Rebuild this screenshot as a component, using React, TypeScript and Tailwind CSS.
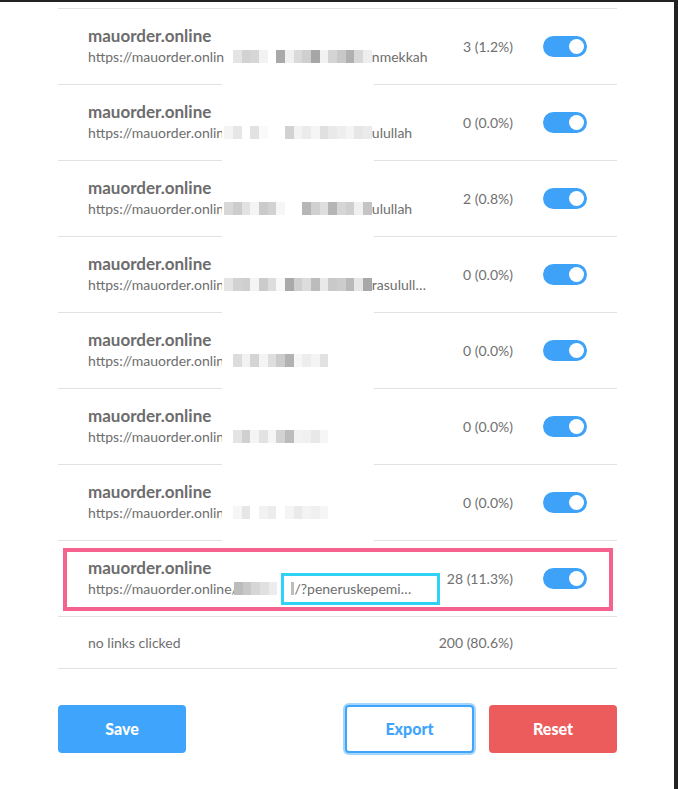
import React from 'react';

type Row = {
  clicks: string;
  tail?: string;
  mosaic: string[];
};

// censored middle part of each url, drawn as a strip of grey blocks
const rows: Row[] = [
  { clicks: '3 (1.2%)', tail: 'nmekkah', mosaic: ['#ffffff', '#e4e4e4', '#d2d2d2', '#d6d6d6', '#f2f2f2', '#ffffff', '#a9a9a9', '#f0f0f0', '#dadada', '#cfcfcf', '#a6a6a6', '#f2f2f2', '#d4d4d4', '#c8c8c8', '#b0b0b0', '#d8d8d8', '#eeeeee'] },
  { clicks: '0 (0.0%)', tail: 'ulullah', mosaic: ['#f4f4f4', '#e6e6e6', '#ffffff', '#e2e2e2', '#fafafa', '#ffffff', '#ffffff', '#d2d2d2', '#f3f3f3', '#ebebeb', '#f5f5f5', '#e0e0e0', '#e9e9e9', '#eeeeee', '#f4f4f4', '#e6e6e6', '#ebebeb'] },
  { clicks: '2 (0.8%)', tail: 'ulullah', mosaic: ['#d8d8d8', '#cccccc', '#e2e2e2', '#f4f4f4', '#cacaca', '#d2d2d2', '#f6f6f6', '#ffffff', '#ffffff', '#b6b6b6', '#d0d0d0', '#dedede', '#b5b5b5', '#d6d6d6', '#cfcfcf', '#f0f0f0', '#c4c4c4'] },
  { clicks: '0 (0.0%)', tail: 'rasulull…', mosaic: ['#e4e4e4', '#d2d2d2', '#cfcfcf', '#f4f4f4', '#cbcbcb', '#dddddd', '#f8f8f8', '#a9a9a9', '#cfcfcf', '#dcdcdc', '#bcbcbc', '#e9e9e9', '#c9c9c9', '#cdcdcd', '#b9b9b9', '#e6e6e6', '#a8a8a8'] },
  { clicks: '0 (0.0%)', mosaic: ['#ffffff', '#dcdcdc', '#f2f2f2', '#d4d4d4', '#f4f4f4', '#dedede', '#cbcbcb', '#b2b2b2', '#f6f6f6', '#ededed', '#f4f4f4', '#e2e2e2'] },
  { clicks: '0 (0.0%)', mosaic: ['#ffffff', '#e4e4e4', '#d0d0d0', '#f4f4f4', '#e2e2e2', '#f5f5f5', '#d2d2d2', '#bcbcbc', '#f2f2f2', '#f0f0f0', '#e8e8e8', '#f6f6f6'] },
  { clicks: '0 (0.0%)', mosaic: ['#ffffff', '#f6f6f6', '#e6e6e6', '#ffffff', '#f2f2f2', '#ececec', '#ffffff', '#f4f4f4', '#eaeaea', '#f3f3f3', '#f0f0f0', '#f6f6f6'] },
];

function Toggle() {
  return (
    <div className="flex h-[21px] w-[44px] shrink-0 items-center justify-end rounded-full bg-[#3da2f8] pr-[3px]">
      <div className="h-[15px] w-[15px] rounded-full bg-white" />
    </div>
  );
}

function Mosaic({ shades }: { shades: string[] }) {
  return (
    <span className="relative z-20 inline-flex h-[13px] shrink-0 items-center bg-white">
      {shades.map((c, i) => (
        <span key={i} className="inline-block h-[13px] w-[8.7px]" style={{ backgroundColor: c }} />
      ))}
    </span>
  );
}

function LinkRow({ row }: { row: Row }) {
  return (
    <div className="flex h-[76px] items-center border-b border-[#e2e2e2] pl-[30px] pr-[30px]">
      <div className="min-w-0 flex-1">
        <div className="text-[17px] font-bold leading-5 text-[#6c6c6c]">mauorder.online</div>
        <div className="flex items-center whitespace-nowrap text-[14px] leading-[22px] text-[#6e6e6e]">
          <span className="shrink-0">https://mauorder.onlin</span>
          <Mosaic shades={row.mosaic} />
          {row.tail && <span className="relative z-20">{row.tail}</span>}
        </div>
      </div>
      <div className="text-right text-[14px] text-[#707070]">{row.clicks}</div>
      <div className="ml-[30px]">
        <Toggle />
      </div>
    </div>
  );
}

export default function App() {
  return (
    <div
      className="relative h-[789px] w-[678px] overflow-hidden bg-white"
      style={{ fontFamily: 'Lato, "Noto Sans", sans-serif' }}
    >
      <div className="h-[2px] w-full bg-[#222]" />
      <div className="absolute right-0 top-0 h-full w-[4px] bg-[#222]" />

      <div className="relative ml-[58px] mt-[6px] w-[559px]">
        {/* white strip left over the dividers by the censoring */}
        <div className="absolute left-[164px] top-[74px] z-10 h-[462px] w-[152px] bg-white" />

        <div className="border-t border-[#e2e2e2]">
          {rows.map((r, i) => (
            <LinkRow key={i} row={r} />
          ))}

          {/* highlighted row */}
          <div className="relative flex h-[76px] items-center border-b border-[#e2e2e2] pl-[30px] pr-[30px]">
            <div className="absolute left-[5px] top-[7px] z-30 h-[63px] w-[550px] border-[4px] border-[#f5628d]" />
            <div className="min-w-0 flex-1">
              <div className="text-[17px] font-bold leading-5 text-[#6c6c6c]">mauorder.online</div>
              <div className="flex items-center whitespace-nowrap text-[14px] leading-[22px] text-[#6e6e6e]">
                <span className="w-[146px] shrink-0">https://mauorder.online/</span>
                <Mosaic shades={['#bcbcbc', '#c8c8c8', '#d6d6d6', '#e0e0e0', '#ececec']} />
                <span className="w-[14px] shrink-0" />
                <span className="relative z-20 inline-block h-[13px] w-[3px] bg-[#bdbdbd]" />
                <span className="relative">
                  /?peneruskepemi…
                  <span className="absolute -left-[13px] -top-[5px] z-30 h-[32px] w-[159px] border-[3px] border-[#2fd2f5]" />
                </span>
              </div>
            </div>
            <div className="text-right text-[14px] text-[#707070]">28 (11.3%)</div>
            <div className="ml-[30px]">
              <Toggle />
            </div>
          </div>

          <div className="flex h-[52px] items-center border-b border-[#e2e2e2] pl-[30px] pr-[104px] text-[14px] text-[#707070]">
            <div className="flex-1">no links clicked</div>
            <div>200 (80.6%)</div>
          </div>
        </div>

        <div className="mt-[36px] flex items-center">
          <button className="h-[48px] w-[128px] rounded-[4px] bg-[#3ea4fc] text-[16px] font-black text-white">Save</button>
          <div className="flex-1" />
          <button className="h-[48px] w-[129px] rounded-[4px] border-2 border-[#3ea4fc] bg-white text-[16px] font-black text-[#3ea4fc] shadow-[0_0_0_2px_#a6d5fb]">
            Export
          </button>
          <button className="ml-[15px] h-[48px] w-[128px] rounded-[4px] bg-[#ec5c5c] text-[16px] font-black text-white">Reset</button>
        </div>
      </div>
    </div>
  );
}
